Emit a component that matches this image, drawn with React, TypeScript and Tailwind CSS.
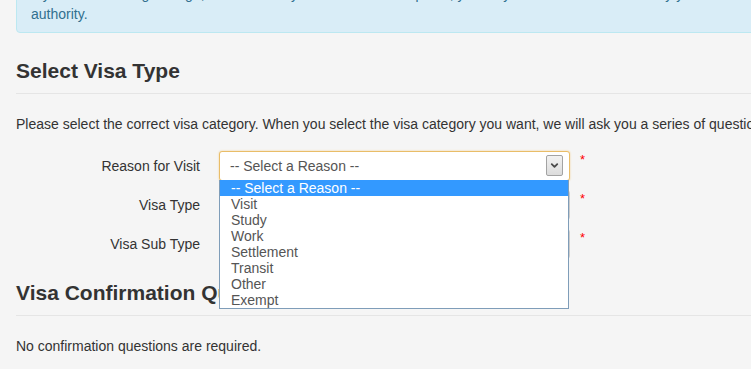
import { ChevronDown } from "lucide-react"

const reasons = ["-- Select a Reason --", "Visit", "Study", "Work", "Settlement", "Transit", "Other", "Exempt"]

function Asterisk() {
  return <span className="ml-[10px] mt-[2px] self-start text-[13px] leading-[13px] text-[#f00]">*</span>
}

function FormRow({ label, children }: { label: string; children: React.ReactNode }) {
  return (
    <div className="flex h-[30px] items-center">
      <label className="w-[184px] text-right">{label}</label>
      <div className="relative ml-[19px] h-[30px] w-[351px]">{children}</div>
      <Asterisk />
    </div>
  )
}

export default function App() {
  return (
    <div className="min-h-screen overflow-hidden bg-[#f5f5f5] font-['Liberation_Sans',Arial,sans-serif] text-[14px] leading-[20px] text-[#333]">
      <div className="w-[1000px] pl-4">
        <div className="-mt-8 whitespace-nowrap rounded-[4px] border border-[#bce8f1] bg-[#d9edf7] px-[14px] pt-[15px] pb-[8px] text-[#31708f]">
          If you are travelling through, or to a country where a visa is required, you may need it to be endorsed by your
          <br />
          authority.
        </div>

        <h3 className="mt-[23px] mb-5 border-b border-[#e5e5e5] pb-[7px] text-[21px] leading-[30px] font-bold">
          Select Visa Type
        </h3>
        <p className="whitespace-nowrap">
          Please select the correct visa category. When you select the visa category you want, we will ask you a series of
          questions about your visit.
        </p>

        <div className="mt-[17px] flex flex-col gap-[9px]">
          <FormRow label="Reason for Visit">
            <div className="relative z-20 flex h-[30px] items-center rounded-[3px] border border-[#e9bd68] bg-white pl-[10px] text-[#555] shadow-[0_0_2px_#f2cf8c]">
              -- Select a Reason --
              <div className="absolute top-[3px] right-[6px] flex h-[21px] w-[17px] items-center justify-center rounded-[2px] border border-[#a3a3a3] bg-gradient-to-b from-[#f2f2f2] to-[#dcdcdc]">
                <ChevronDown className="h-[11px] w-[11px] text-[#4a4a4a]" strokeWidth={4} />
              </div>
            </div>
            <ul className="absolute top-[29px] left-0 z-30 w-[350px] border border-t-0 border-[#7f9db9] bg-white text-[14px] leading-[16px] text-[#555]">
              {reasons.map((r, i) => (
                <li key={r} className={`pl-[11px] ${i === 0 ? "bg-[#3399ff] text-white" : ""}`}>
                  {r}
                </li>
              ))}
            </ul>
          </FormRow>
          <FormRow label="Visa Type">
            <div className="h-[30px] rounded-[3px] border border-[#ccc] bg-white" />
          </FormRow>
          <FormRow label="Visa Sub Type">
            <div className="h-[30px] rounded-[3px] border border-[#ccc] bg-white" />
          </FormRow>
        </div>

        <h3 className="mt-[19px] mb-5 border-b border-[#e5e5e5] pb-[7px] text-[21px] leading-[30px] font-bold">
          Visa Confirmation Questions
        </h3>
        <p>No confirmation questions are required.</p>
      </div>
    </div>
  )
}
